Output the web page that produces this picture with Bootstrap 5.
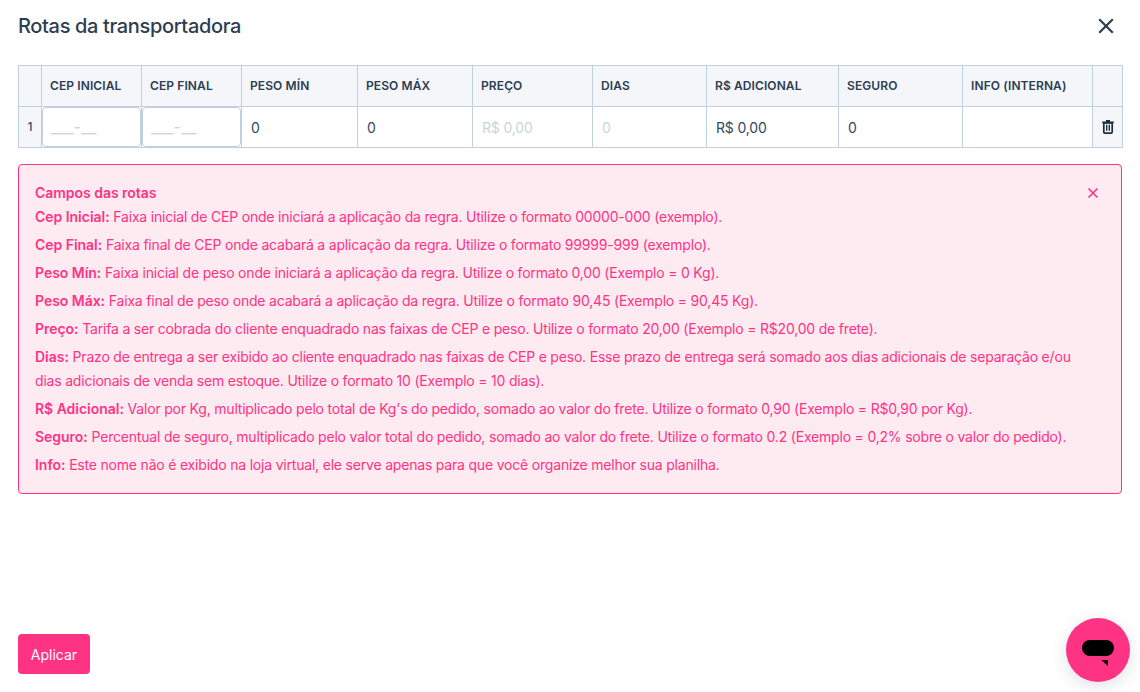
<!DOCTYPE html>
<html lang="pt-BR">
<head>
<meta charset="utf-8">
<title>Rotas da transportadora</title>
<link href="https://cdn.jsdelivr.net/npm/bootstrap@5.3.0/dist/css/bootstrap.min.css" rel="stylesheet">
<style>
html,body{height:692px;overflow:hidden}
body{font-family:Inter,"Liberation Sans",sans-serif;color:#2c3e50;background:#fff;font-size:14px;letter-spacing:-.155px}
.shell{height:692px;padding:0 18px 18px}
.head-bar{height:52px;margin-bottom:13px}
.title-txt{font-size:20px;font-weight:500;color:#2c3e50;margin:0;line-height:52px;letter-spacing:-.35px}
.close-x{background:none;border:0;padding:0;width:32px;height:32px;color:#2c3e50}
.routes{table-layout:fixed;width:1104px;border-collapse:collapse;margin:0;color:#34495e}
.routes th,.routes td{border:1px solid #c1d0de;padding:0}
.routes th{background:#f4f6fa;height:41px;font-size:12px;font-weight:600;letter-spacing:.1px;padding:0 8px;white-space:nowrap;color:#2c3e50}
.routes td{height:41px;font-size:14px;vertical-align:middle;padding:0 9px}
.routes td.side{background:#f4f6fa;text-align:center;padding:0;font-size:12px;font-weight:500}
.routes td.mask{padding:0}
.mask-in{width:100%;height:40px;border:1px solid #c1d0de;border-radius:4px;background:#fff;padding:0 8px;font-size:16.5px;display:block;outline:0;letter-spacing:0}
.mask-in::placeholder,.ph{color:#c9d4df;opacity:1}
.routes td.ph{color:#c9d4df}
.note{margin-top:16px;background:#feeaf1;border:1px solid #ff3384;border-radius:4px;color:#ff3384;padding:16px;height:330px;font-size:14px;line-height:24px;letter-spacing:-.195px}
.note-top{height:24px;margin-bottom:0}
.note-top strong{font-weight:600;letter-spacing:-.03px}
.note p{margin:0 0 4px;padding-right:20px}
.note p strong{font-weight:600;letter-spacing:-.03px}
.note-x{background:none;border:0;padding:0;width:16px;height:16px;color:#ff3384;margin-right:4px;line-height:0}
.apply{background:#ff3384;border:0;border-radius:4px;color:#fff;font-size:14px;height:40px;width:72px;padding:0}
.chat{position:fixed;left:1066px;top:618px;width:64px;height:64px;border-radius:50%;background:#ff3384;box-shadow:0 4px 16px rgba(44,62,80,.16);border:0;padding:0}
.chat svg{margin-top:6px}
</style>
</head>
<body>
<div class="shell d-flex flex-column">
  <div class="head-bar d-flex justify-content-between align-items-center">
    <h1 class="title-txt">Rotas da transportadora</h1>
    <button class="close-x d-flex align-items-center justify-content-center" aria-label="Fechar">
      <svg width="16" height="16" viewBox="0 0 16 16"><path d="M1.2 1.2 14.800 14.800M14.800 1.200 1.200 14.800" stroke="currentColor" stroke-width="2.2" fill="none"/></svg>
    </button>
  </div>
  <table class="routes">
    <colgroup>
      <col style="width:23px"><col style="width:100px"><col style="width:100px"><col style="width:116px"><col style="width:115px"><col style="width:120px"><col style="width:114px"><col style="width:132px"><col style="width:124px"><col style="width:130px"><col style="width:30px">
    </colgroup>
    <thead>
      <tr><th></th><th>CEP INICIAL</th><th>CEP FINAL</th><th>PESO MÍN</th><th>PESO MÁX</th><th>PREÇO</th><th>DIAS</th><th>R$ ADICIONAL</th><th>SEGURO</th><th>INFO (INTERNA)</th><th></th></tr>
    </thead>
    <tbody>
      <tr>
        <td class="side">1</td>
        <td class="mask"><input class="mask-in" placeholder="___-__" aria-label="CEP inicial"></td>
        <td class="mask"><input class="mask-in" placeholder="___-__" aria-label="CEP final"></td>
        <td>0</td><td>0</td><td class="ph">R$ 0,00</td><td class="ph">0</td><td>R$ 0,00</td><td>0</td><td></td>
        <td class="side">
          <svg width="12" height="14" viewBox="0 0 12 14" class="d-block mx-auto"><path d="M4 .8h4M.2 2.400h11.600" stroke="#1f2d3a" stroke-width="1.600" fill="none"/><rect x="1.800" y="2.800" width="8.400" height="10.400" rx="1.200" fill="none" stroke="#1f2d3a" stroke-width="1.700"/><path d="M4.700 4.800v6M7.300 4.800v6" stroke="#1f2d3a" stroke-width="1.400"/></svg>
        </td>
      </tr>
    </tbody>
  </table>
  <div class="note">
    <div class="note-top d-flex justify-content-between align-items-center">
      <strong>Campos das rotas</strong>
      <button class="note-x" aria-label="Fechar"><svg width="16" height="16" viewBox="0 0 16 16"><path d="M3.500 3.500 12.500 12.500M12.500 3.500 3.500 12.500" stroke="currentColor" stroke-width="1.600" fill="none"/></svg></button>
    </div>
    <p><strong>Cep Inicial:</strong> Faixa inicial de CEP onde iniciará a aplicação da regra. Utilize o formato 00000-000 (exemplo).</p>
    <p><strong>Cep Final:</strong> Faixa final de CEP onde acabará a aplicação da regra. Utilize o formato 99999-999 (exemplo).</p>
    <p><strong>Peso Mín:</strong> Faixa inicial de peso onde iniciará a aplicação da regra. Utilize o formato 0,00 (Exemplo = 0 Kg).</p>
    <p><strong>Peso Máx:</strong> Faixa final de peso onde acabará a aplicação da regra. Utilize o formato 90,45 (Exemplo = 90,45 Kg).</p>
    <p><strong>Preço:</strong> Tarifa a ser cobrada do cliente enquadrado nas faixas de CEP e peso. Utilize o formato 20,00 (Exemplo = R$20,00 de frete).</p>
    <p><strong>Dias:</strong> Prazo de entrega a ser exibido ao cliente enquadrado nas faixas de CEP e peso. Esse prazo de entrega será somado aos dias adicionais de separação e/ou dias adicionais de venda sem estoque. Utilize o formato 10 (Exemplo = 10 dias).</p>
    <p><strong>R$ Adicional:</strong> Valor por Kg, multiplicado pelo total de Kg's do pedido, somado ao valor do frete. Utilize o formato 0,90 (Exemplo = R$0,90 por Kg).</p>
    <p><strong>Seguro:</strong> Percentual de seguro, multiplicado pelo valor total do pedido, somado ao valor do frete. Utilize o formato 0.2 (Exemplo = 0,2% sobre o valor do pedido).</p>
    <p><strong>Info:</strong> Este nome não é exibido na loja virtual, ele serve apenas para que você organize melhor sua planilha.</p>
  </div>
  <div class="mt-auto"><button class="apply">Aplicar</button></div>
</div>
<button class="chat d-flex align-items-center justify-content-center" aria-label="Chat">
  <svg width="32" height="26" viewBox="0 0 32 26"><rect x="0" y="0" width="32" height="16" rx="8" fill="#000"/><path d="M19.300 20h6.700v6z" fill="#000"/></svg>
</button>
<script src="https://cdn.jsdelivr.net/npm/bootstrap@5.3.0/dist/js/bootstrap.bundle.min.js"></script>
</body>
</html>
